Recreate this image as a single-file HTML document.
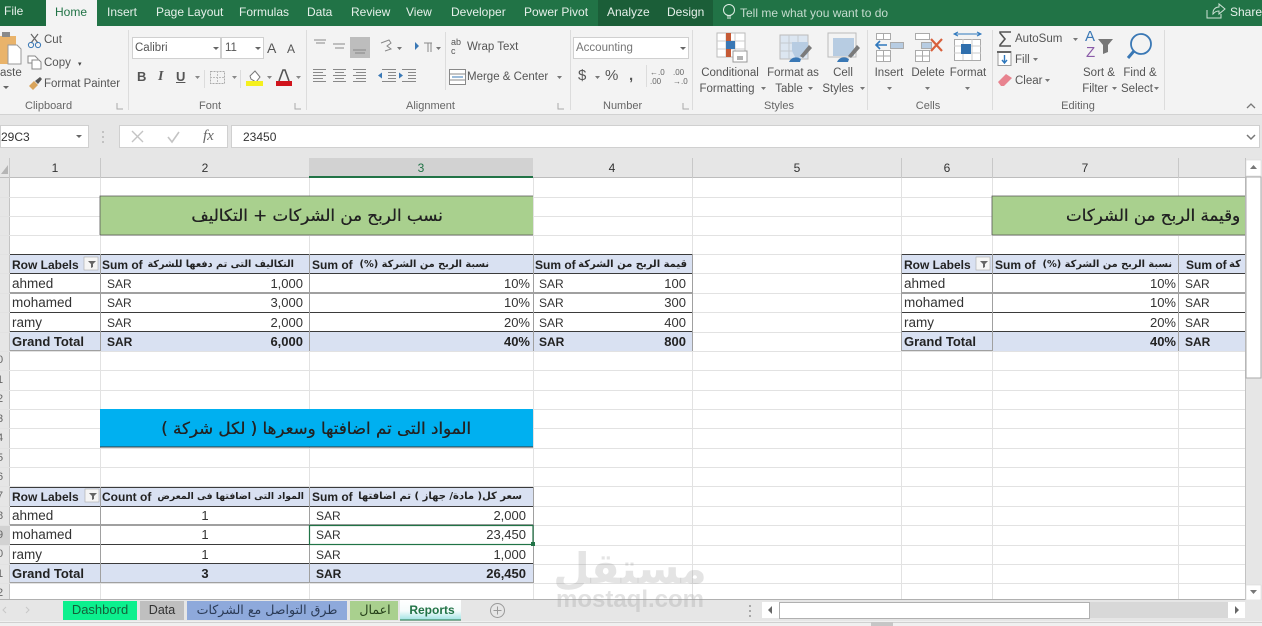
<!DOCTYPE html>
<html><head><meta charset="utf-8">
<style>
html,body{margin:0;padding:0;width:1262px;height:626px;overflow:hidden;background:#fff}
#w{position:relative;width:1262px;height:626px;overflow:hidden;font-family:"Liberation Sans",sans-serif;color:#444;filter:blur(.3px)}
svg{position:absolute;left:0;top:0}
.t{position:absolute;white-space:nowrap;line-height:16px;font-size:12px}
.c{transform:translateX(-50%)}
.r{transform:translateX(-100%)}
.w{color:#e6f0ea}
.s{font-size:11.5px;color:#555}
.g{font-size:11px;color:#666}
.d{font-size:13px;color:#333}
.n{font-size:13.5px;color:#333}
.m{font-size:12px;color:#333}
.b{font-weight:bold;color:#222;font-size:13px}
.bm{font-weight:bold;color:#222;font-size:12px}
.h{font-weight:bold;color:#222;font-size:12px}
.a{font-family:"DejaVu Sans",sans-serif;font-weight:bold;color:#222;font-size:10px}
.ti{font-family:"DejaVu Sans",sans-serif;font-size:16.7px;color:#222;line-height:22px;text-shadow:.3px 0 #222}
</style></head><body><div id="w">
<svg width="1262" height="626" viewBox="0 0 1262 626">
<!-- title -->
<rect width="1262" height="26" fill="#217346"/>
<rect x="0" y="0" width="46" height="26" fill="#1d6b3f"/>
<rect x="46" y="0" width="51" height="27" fill="#f3f3f3"/>
<rect x="598" y="0" width="115" height="26" fill="#1b5e38"/>
<!-- ribbon -->
<rect y="26" width="1262" height="89" fill="#f3f3f3"/>
<rect y="115" width="1262" height="43" fill="#e6e6e6"/>
<rect y="114" width="1262" height="1" fill="#d2d2d2"/>
<g fill="#dcdcdc"><rect x="128" y="30" width="1" height="80"/><rect x="306" y="30" width="1" height="80"/><rect x="570" y="30" width="1" height="80"/><rect x="692" y="30" width="1" height="80"/><rect x="867" y="30" width="1" height="80"/><rect x="992" y="30" width="1" height="80"/><rect x="1164" y="30" width="1" height="80"/><rect x="204" y="70" width="1" height="18"/><rect x="240" y="70" width="1" height="18"/><rect x="445" y="32" width="1" height="58"/></g>
<!-- paste -->
<rect x="0" y="36" width="16" height="28" fill="#e9b36a"/><rect x="2" y="32" width="8" height="5" fill="#8a8a8a"/><path d="M8 45h9l4 4v15H8z" fill="#fff" stroke="#9a9a9a"/>
<path d="M3 87l3 3 3-3z" fill="#666" transform="translate(0 -1)"/>
<!-- cut copy painter -->
<path d="M31 34l7 9M38 34l-7 9" stroke="#666" stroke-width="1.2" fill="none"/><circle cx="31" cy="45" r="2.6" fill="none" stroke="#3a78b5"/><circle cx="38" cy="45" r="2.6" fill="none" stroke="#3a78b5"/>
<path d="M28 56h7l3 3v4h-10z" fill="#fff" stroke="#888"/><path d="M32 60h7l2 2v7h-9z" fill="#fff" stroke="#888"/>
<path d="M29 86l5-5 4 4-5 5z" fill="#d9a45b"/><path d="M35 81l5-4 2 2-4 5z" fill="#555"/>
<!-- combos -->
<g fill="#fff" stroke="#d0d0d0"><rect x="132.500" y="37.500" width="88" height="21"/><rect x="221.500" y="37.500" width="42" height="21"/><rect x="573.500" y="37.500" width="115" height="21"/><rect x="0.500" y="125.500" width="88" height="22"/><rect x="119.500" y="125.500" width="108" height="22"/><rect x="231.500" y="125.500" width="1028" height="22"/></g>
<g fill="#666"><path d="M213 47h6l-3 3z"/><path d="M255 47h6l-3 3z"/><path d="M680 47h6l-3 3z"/><path d="M76 135h6l-3 3z"/></g>
<!-- font row -->
<g fill="#888" font-size="0"><path d="M195 76h5l-2.500 3zM232 76h5l-2.500 3zM267 76h5l-2.500 3zM296 76h5l-2.500 3z"/></g>
<rect x="210.500" y="71.500" width="14" height="12" fill="none" stroke="#aaa" stroke-dasharray="2 1"/><path d="M217.500 71v13M210 77.500h15" stroke="#bbb" stroke-dasharray="2 1"/>
<path d="M250 76l5-5 5 6-4 5-5-3z" fill="#fff" stroke="#777"/><rect x="246" y="81" width="17" height="5" fill="#f5f01e"/>
<path d="M279 81l4-11h2l4 11" fill="none" stroke="#555" stroke-width="1.6"/><rect x="276" y="81" width="16" height="5" fill="#d0141c"/>
<!-- alignment -->
<rect x="350" y="37" width="20" height="21" fill="#bdbdbd"/>
<g stroke="#888" stroke-width="1" fill="none">
<path d="M314 40h12M316 43h9M333 44h12M335 48h9M353 50h13M355 53h10"/>
<path d="M313 69.500h13M313 72.500h10M313 75.500h13M313 78.500h10M313 81.500h13"/>
<path d="M333 69.500h13M335 72.500h9M333 75.500h13M335 78.500h9M333 81.500h13"/>
<path d="M353 69.500h13M356 72.500h10M353 75.500h13M356 78.500h10M353 81.500h13"/>
<path d="M382 69.500h14M388 72.500h8M388 75.500h8M388 78.500h8M382 81.500h14M402 69.500h14M408 72.500h8M408 75.500h8M408 78.500h8M402 81.500h14"/>
<path d="M381 43l8-3 2 3-4 3 4 3-6 2"/>
<path d="M424 43h8M428 43v9M431 43v9"/>
</g>
<g fill="#3a78b5"><path d="M378 75.500l4-3v6zM399 72.500l4 3-4 3zM415 42l4 4-4 4z"/></g>
<g fill="#777"><path d="M397 47h5l-2.500 3zM436 47h5l-2.500 3zM557 76h5l-2.500 3z"/></g>
<path d="M449.500 69.500h16v15h-16zM449.500 74h16M449.500 80h16" fill="#fff" stroke="#888"/><path d="M452 77h11" stroke="#3a78b5"/>
<!-- number -->
<path d="M595 76h5l-2.500 3zM600 76h0" fill="#777"/>
<rect x="646" y="65" width="1" height="22" fill="#dcdcdc"/>
<!-- styles icons -->
<g>
<rect x="717" y="33" width="28" height="24" fill="#fff" stroke="#bbb"/><path d="M717 41h28M717 49h28M726 33v24M735 33v24" stroke="#ccc"/>
<rect x="726" y="33" width="5" height="8" fill="#c55a36"/><rect x="726" y="41" width="9" height="8" fill="#3a78b5"/><rect x="726" y="49" width="5" height="8" fill="#c55a36"/>
<rect x="733" y="51" width="14" height="11" fill="#fff" stroke="#999"/><path d="M737 57h6M737 59h6" stroke="#666"/>
<rect x="780" y="35" width="28" height="24" fill="#dce6f1" stroke="#bbb"/><path d="M780 43h28M780 51h28M789 35v24M798 35v24" stroke="#c4c9cf"/><path d="M792 42h16v12l-12 5-4-8z" fill="#b7cce2"/>
<path d="M800 56l9-11 3 3-9 10z" fill="#7a7a7a"/><path d="M789 62c2-5 8-6 12-3l-1 3z" fill="#3a78b5"/>
<rect x="828" y="33" width="28" height="24" fill="#f3f3f3" stroke="#bbb"/><rect x="833" y="38" width="21" height="18" fill="#b7cce2"/>
<path d="M848 56l9-11 3 3-9 10z" fill="#7a7a7a"/><path d="M837 62c2-5 8-6 12-3l-1 3z" fill="#3a78b5"/>
</g>
<!-- cells icons -->
<g fill="#fff" stroke="#aaa">
<rect x="876.500" y="33.500" width="14" height="6"/><path d="M883.500 33v6" /><rect x="876.500" y="50.500" width="14" height="11"/><path d="M883.500 50v11M876 56h15"/>
<rect x="890.500" y="42.500" width="13" height="6" fill="#b7cce2"/>
<rect x="915.500" y="33.500" width="14" height="6"/><rect x="915.500" y="50.500" width="14" height="11"/><path d="M922.500 50v11M915 56h15"/>
<rect x="921.500" y="42.500" width="10" height="6" fill="#b7cce2"/>
<rect x="954.500" y="39.500" width="26" height="21"/><path d="M963 39v21M972 39v21M954 46h27M954 53h27" stroke="#ccc"/>
</g>
<path d="M887 45h-11M880 41l-4 4 4 4" stroke="#2f78bd" stroke-width="1.6" fill="none"/>
<path d="M931 39l11 12M942 39l-11 12" stroke="#d8603c" stroke-width="2.200"/>
<rect x="961" y="44" width="10" height="10" fill="#2f6fad"/>
<path d="M954 34h27M958 32l-4 2 4 2M977 32l4 2-4 2" stroke="#2f78bd" fill="none"/>
<!-- editing icons -->
<path d="M1011 32h-11v1l5 6-5 6v1h11" fill="none" stroke="#555" stroke-width="1.600"/>
<rect x="998" y="51.500" width="13" height="14" fill="#fff" stroke="#999"/><rect x="997" y="51" width="14" height="2" fill="#666"/><path d="M1004.500 55v7M1002 60l2.500 3 2.500-3" stroke="#2f78bd" fill="none" stroke-width="1.400"/>
<path d="M998 82l8-8 6 4-8 8h-3z" fill="#e8838f"/>
<path d="M1098 39h15l-5 6v7l-5 2v-9z" fill="#777"/>
<circle cx="1141" cy="44" r="10" fill="none" stroke="#3a78b5" stroke-width="1.800"/><path d="M1134 51l-6 7" stroke="#3a78b5" stroke-width="3"/>
<path d="M1073 38h5l-2.500 3zM1033 58h5l-2.500 3zM1045 79h5l-2.500 3zM1033 38h0zM761 87h5l-2.500 3zM808 87h5l-2.500 3zM860 87h5l-2.500 3zM887 87h5l-2.500 3zM925 87h5l-2.500 3zM965 87h5l-2.500 3zM1112 87h5l-2.500 3zM1154 87h5l-2.500 3z" fill="#777"/>
<path d="M1247 108l4-4 4 4" fill="none" stroke="#777" stroke-width="1.300"/>
<path d="M1247 135l4 4 4-4" fill="none" stroke="#777" stroke-width="1.500"/>
<g fill="none" stroke="#aaa"><path d="M117 103v6h6M295 103v6h6M558 103v6h6M683 103v6h6" /></g>
<!-- formula marks -->
<path d="M132 131l11 11M143 131l-11 11" stroke="#c4c4c4" stroke-width="1.400"/><path d="M168 137l4 5 7-10" stroke="#c4c4c4" stroke-width="1.600" fill="none"/>
<g fill="#c2c2c2"><rect x="102" y="131" width="2" height="2"/><rect x="102" y="136" width="2" height="2"/><rect x="102" y="141" width="2" height="2"/></g>
<!-- lightbulb / share -->
<circle cx="729" cy="10" r="5.500" fill="none" stroke="#dfeee5"/><path d="M727 16h4M727 18h4" stroke="#dfeee5"/>
<path d="M1207 10v8h14v-4M1213 13c0-4 3-6 6-6V4l6 5-6 5v-3c-3 0-4 1-6 3z" fill="none" stroke="#cfe3d7"/>
<!-- column headers -->
<rect y="158" width="1245" height="19" fill="#e6e6e6"/><rect x="0" y="177" width="1245" height="1" fill="#bdbdbd"/>
<rect x="309" y="158" width="224" height="19" fill="#d2d2d2"/><rect x="309" y="176" width="224" height="2" fill="#217346"/>
<path d="M1 174l7-9v9z" fill="#b5b5b5"/>
<g fill="#c8c8c8"><rect x="9" y="158" width="1" height="20"/><rect x="100" y="158" width="1" height="20"/><rect x="692" y="158" width="1" height="20"/><rect x="901" y="158" width="1" height="20"/><rect x="992" y="158" width="1" height="20"/><rect x="1178" y="158" width="1" height="20"/></g>
<!-- row header col -->
<rect y="178" width="10" height="422" fill="#e6e6e6"/><rect x="9" y="178" width="1" height="422" fill="#c4c4c4"/>
<rect y="526" width="10" height="19" fill="#d2d2d2"/>
<!-- grid -->
<g fill="#e2e2e2">
<rect x="0" y="197" width="1245" height="1"/><rect x="0" y="216" width="1245" height="1"/><rect x="0" y="235" width="1245" height="1"/><rect x="0" y="254" width="1245" height="1"/><rect x="0" y="273" width="1245" height="1"/><rect x="0" y="293" width="1245" height="1"/><rect x="0" y="312" width="1245" height="1"/><rect x="0" y="332" width="1245" height="1"/><rect x="0" y="351" width="1245" height="1"/><rect x="0" y="370" width="1245" height="1"/><rect x="0" y="390" width="1245" height="1"/><rect x="0" y="409" width="1245" height="1"/><rect x="0" y="428" width="1245" height="1"/><rect x="0" y="448" width="1245" height="1"/><rect x="0" y="467" width="1245" height="1"/><rect x="0" y="486" width="1245" height="1"/><rect x="0" y="506" width="1245" height="1"/><rect x="0" y="525" width="1245" height="1"/><rect x="0" y="545" width="1245" height="1"/><rect x="0" y="564" width="1245" height="1"/><rect x="0" y="583" width="1245" height="1"/>
<rect x="100" y="178" width="1" height="422"/><rect x="309" y="178" width="1" height="422"/><rect x="533" y="178" width="1" height="422"/><rect x="692" y="178" width="1" height="422"/><rect x="901" y="178" width="1" height="422"/><rect x="992" y="178" width="1" height="422"/><rect x="1178" y="178" width="1" height="422"/>
</g>
<!-- titles -->
<rect x="100" y="196" width="433" height="39" fill="#a9d08e"/><path d="M100 235V196H533M100 235H533" fill="none" stroke="#555" stroke-width=".8"/>
<rect x="992" y="196" width="253" height="39" fill="#a9d08e"/><path d="M992 235V196H1245M992 235H1245" fill="none" stroke="#555" stroke-width=".8"/>
<rect x="100" y="409" width="433" height="38" fill="#00b0f0"/><path d="M100 447h433" stroke="#333"/>
<!-- tables fills -->
<rect x="10" y="254" width="682" height="19" fill="#d9e1f2"/><rect x="10" y="332" width="682" height="19" fill="#d9e1f2"/>
<rect x="901" y="254" width="344" height="19" fill="#d9e1f2"/><rect x="901" y="332" width="344" height="19" fill="#d9e1f2"/>
<rect x="10" y="487" width="523" height="19" fill="#d9e1f2"/><rect x="10" y="564" width="523" height="19" fill="#d9e1f2"/>
<rect x="10" y="273" width="682" height="59" fill="#fff"/><rect x="901" y="273" width="344" height="59" fill="#fff"/><rect x="10" y="506" width="523" height="58" fill="#fff"/>
<!-- table lines -->
<g fill="#3b3b3b">
<rect x="10" y="254" width="682" height="1"/><rect x="10" y="273" width="682" height="1"/><rect x="10" y="312" width="682" height="1"/><rect x="10" y="331" width="682" height="1"/>
<rect x="901" y="254" width="344" height="1"/><rect x="901" y="273" width="344" height="1"/><rect x="901" y="312" width="344" height="1"/><rect x="901" y="331" width="344" height="1"/>
<rect x="10" y="487" width="523" height="1"/><rect x="10" y="506" width="523" height="1"/><rect x="10" y="544" width="523" height="1"/><rect x="10" y="563" width="523" height="1"/>
</g>
<g fill="#a0a0a0">
<rect x="10" y="292" width="682" height="2"/><rect x="901" y="292" width="344" height="2"/><rect x="10" y="524" width="523" height="2"/>
<rect x="10" y="350" width="90" height="1"/><rect x="901" y="350" width="91" height="1"/><rect x="10" y="582" width="523" height="1"/>
<rect x="100" y="254" width="1" height="97"/><rect x="309" y="254" width="1" height="97"/><rect x="533" y="254" width="1" height="97"/><rect x="692" y="254" width="1" height="97"/>
<rect x="901" y="254" width="1" height="97"/><rect x="992" y="254" width="1" height="97"/><rect x="1178" y="254" width="1" height="97"/>
<rect x="100" y="487" width="1" height="96"/><rect x="309" y="487" width="1" height="96"/><rect x="533" y="487" width="1" height="96"/>
</g>
<!-- filter buttons -->
<g><rect x="84" y="257" width="14" height="13" fill="#f5f5f5" stroke="#aaa" stroke-width=".6"/><path d="M88 261h8l-3 3v3l-2 1v-4z" fill="#666"/><rect x="85" y="489" width="14" height="13" fill="#f5f5f5" stroke="#aaa" stroke-width=".6"/><path d="M89 493h8l-3 3v3l-2 1v-4z" fill="#666"/><rect x="976" y="257" width="14" height="13" fill="#f5f5f5" stroke="#aaa" stroke-width=".6"/><path d="M980 261h8l-3 3v3l-2 1v-4z" fill="#666"/></g>
<!-- selection -->
<rect x="309.500" y="525.500" width="223.500" height="19" fill="none" stroke="#217346" stroke-width="1.200"/><rect x="531" y="542" width="4" height="4" fill="#217346"/>
<!-- vertical scrollbar -->
<rect x="1245" y="158" width="17" height="442" fill="#e6e6e6"/><rect x="1245" y="158" width="1" height="442" fill="#c2c2c2"/>
<rect x="1246" y="160" width="15" height="16" fill="#fff" stroke="#d8d8d8" stroke-width=".6"/><path d="M1250 169l3.500-4 3.500 4z" fill="#777"/>
<rect x="1246" y="177" width="15" height="201" fill="#fff" stroke="#aaa"/>
<rect x="1246" y="585" width="15" height="15" fill="#fff" stroke="#d8d8d8" stroke-width=".6"/><path d="M1250 590l3.500 4 3.500-4z" fill="#777"/>
<!-- tab strip -->
<rect y="600" width="1262" height="21" fill="#e6e6e6"/><rect y="599" width="1245" height="1" fill="#b0b0b0"/><rect y="621" width="1262" height="5" fill="#f0f0f0"/><rect y="622" width="1262" height="1" fill="#d0d0d0"/>
<path d="M6 607l-3 3 3 3M26 607l3 3-3 3" fill="none" stroke="#c8c8c8"/>
<rect x="63" y="601" width="74" height="19" fill="#0cf08e"/>
<rect x="140" y="601" width="44" height="19" fill="#bfbfbf"/>
<rect x="187" y="601" width="160" height="19" fill="#8ea9db"/>
<rect x="350" y="601" width="48" height="19" fill="#a9d08e"/>
<defs><linearGradient id="tg" x1="0" y1="0" x2="0" y2="1"><stop offset="0" stop-color="#fff"/><stop offset=".55" stop-color="#f5fbfb"/><stop offset="1" stop-color="#9fe3e3"/></linearGradient></defs>
<rect x="400" y="600" width="61" height="20" fill="url(#tg)"/><path d="M400 620h61" stroke="#217346"/>
<circle cx="497.500" cy="610.500" r="7" fill="none" stroke="#9a9a9a"/><path d="M497.500 606.500v8M493.500 610.500h8" stroke="#9a9a9a"/>
<!-- h scrollbar -->
<g fill="#a8a8a8"><rect x="749" y="605" width="2" height="2"/><rect x="749" y="610" width="2" height="2"/><rect x="749" y="615" width="2" height="2"/></g>
<rect x="762" y="602" width="17" height="16" fill="#fff"/><path d="M772 606l-4 4 4 4z" fill="#666"/>
<rect x="779.500" y="602.500" width="310" height="16" fill="#fff" stroke="#b0b0b0"/>
<rect x="1090" y="602" width="138" height="16" fill="#d8d8d8"/>
<rect x="1228" y="602" width="17" height="16" fill="#fff"/><path d="M1235 606l4 4-4 4z" fill="#666"/>
<rect x="871" y="622" width="22" height="4" fill="#c6c6c6"/>
</svg>

<!-- title bar -->
<div class="t w" style="left:4px;top:3px">File</div>
<div class="t" style="left:55px;top:4px;color:#217346">Home</div>
<div class="t w" style="left:107px;top:4px">Insert</div>
<div class="t w" style="left:156px;top:4px">Page Layout</div>
<div class="t w" style="left:239px;top:4px">Formulas</div>
<div class="t w" style="left:307px;top:4px">Data</div>
<div class="t w" style="left:351px;top:4px">Review</div>
<div class="t w" style="left:406px;top:4px">View</div>
<div class="t w" style="left:451px;top:4px">Developer</div>
<div class="t w" style="left:524px;top:4px">Power Pivot</div>
<div class="t w" style="left:607px;top:4px">Analyze</div>
<div class="t w" style="left:667px;top:4px">Design</div>
<div class="t" style="left:740px;top:5px;color:#c5dccf">Tell me what you want to do</div>
<div class="t w" style="left:1230px;top:4px">Share</div>

<!-- clipboard -->
<div class="t s" style="left:0;top:65px">aste</div>
<div class="t s" style="left:44px;top:32px">Cut</div>
<div class="t s" style="left:44px;top:55px">Copy</div>
<div class="t" style="left:78px;top:57px;font-size:7px">▾</div>
<div class="t s" style="left:44px;top:76px">Format Painter</div>
<div class="t g" style="left:25px;top:98px">Clipboard</div>
<!-- font -->
<div class="t s" style="left:135px;top:40px">Calibri</div>
<div class="t s" style="left:225px;top:40px">11</div>
<div class="t" style="left:267px;top:40px;font-size:14px;color:#555">A</div>
<div class="t" style="left:287px;top:41px;font-size:12px;color:#555">A</div>
<div class="t" style="left:137px;top:69px;font-weight:bold;font-size:13px;color:#555">B</div>
<div class="t" style="left:158px;top:69px;font-style:italic;font-weight:bold;font-family:'Liberation Serif',serif;font-size:14px;color:#555">I</div>
<div class="t" style="left:176px;top:69px;font-weight:bold;font-size:13px;color:#555;text-decoration:underline">U</div>
<div class="t g" style="left:199px;top:98px">Font</div>
<!-- alignment -->
<div class="t" style="left:451px;top:38px;font-size:9px;line-height:9px;color:#555">ab<br>c</div>
<div class="t s" style="left:467px;top:39px">Wrap Text</div>
<div class="t s" style="left:467px;top:69px">Merge &amp; Center</div>
<div class="t g" style="left:406px;top:98px">Alignment</div>
<!-- number -->
<div class="t s" style="left:576px;top:40px;color:#777">Accounting</div>
<div class="t" style="left:578px;top:68px;font-size:15px;color:#555">$</div>
<div class="t" style="left:605px;top:68px;font-size:15px;color:#555">%</div>
<div class="t" style="left:629px;top:68px;font-size:15px;font-weight:bold;color:#555">,</div>
<div class="t" style="left:650px;top:68px;font-size:8px;line-height:9px;color:#666">←.0<br>.00</div>
<div class="t" style="left:673px;top:68px;font-size:8px;line-height:9px;color:#666">.00<br>→.0</div>
<div class="t g" style="left:603px;top:98px">Number</div>
<!-- styles -->
<div class="t s c" style="left:730px;top:65px">Conditional</div>
<div class="t s c" style="left:727px;top:81px">Formatting</div>
<div class="t s c" style="left:793px;top:65px">Format as</div>
<div class="t s c" style="left:789px;top:81px">Table</div>
<div class="t s c" style="left:843px;top:65px">Cell</div>
<div class="t s c" style="left:838px;top:81px">Styles</div>
<div class="t g c" style="left:779px;top:98px">Styles</div>
<!-- cells -->
<div class="t s c" style="left:889px;top:65px">Insert</div>
<div class="t s c" style="left:928px;top:65px">Delete</div>
<div class="t s c" style="left:968px;top:65px">Format</div>
<div class="t g c" style="left:928px;top:98px">Cells</div>
<!-- editing -->
<div class="t s" style="left:1015px;top:31px">AutoSum</div>
<div class="t s" style="left:1015px;top:52px">Fill</div>
<div class="t s" style="left:1015px;top:73px">Clear</div>
<div class="t" style="left:1085px;top:29px;font-size:15px;color:#3a78b5">A</div>
<div class="t" style="left:1086px;top:45px;font-size:15px;color:#8a5ba8">Z</div>
<div class="t s c" style="left:1099px;top:65px">Sort &amp;</div>
<div class="t s c" style="left:1095px;top:81px">Filter</div>
<div class="t s c" style="left:1140px;top:65px">Find &amp;</div>
<div class="t s c" style="left:1137px;top:81px">Select</div>
<div class="t g c" style="left:1078px;top:98px">Editing</div>
<!-- formula bar -->
<div class="t m" style="left:1px;top:129px">29C3</div>
<div class="t" style="left:203px;top:128px;font-family:'Liberation Serif',serif;font-style:italic;font-size:15px;color:#666">fx</div>
<div class="t m" style="left:243px;top:129px">23450</div>
<!-- column letters -->
<div class="t m c" style="left:55px;top:160px">1</div>
<div class="t m c" style="left:205px;top:160px">2</div>
<div class="t m c" style="left:421px;top:160px;color:#217346">3</div>
<div class="t m c" style="left:612px;top:160px">4</div>
<div class="t m c" style="left:797px;top:160px">5</div>
<div class="t m c" style="left:947px;top:160px">6</div>
<div class="t m c" style="left:1085px;top:160px">7</div>
<!-- row number fragments -->
<div class="t g" style="left:-3px;top:352px">0</div><div class="t g" style="left:-3px;top:372px">1</div><div class="t g" style="left:-3px;top:391px">2</div><div class="t g" style="left:-3px;top:411px">3</div><div class="t g" style="left:-3px;top:430px">4</div><div class="t g" style="left:-3px;top:450px">5</div><div class="t g" style="left:-3px;top:469px">6</div><div class="t g" style="left:-3px;top:488px">7</div><div class="t g" style="left:-3px;top:508px">8</div><div class="t g" style="left:-3px;top:527px">9</div><div class="t g" style="left:-3px;top:546px">0</div><div class="t g" style="left:-3px;top:566px">1</div><div class="t g" style="left:-3px;top:585px">2</div>

<!-- titles -->
<div class="t ti c" dir="rtl" style="left:317px;top:204px">نسب الربح من الشركات + التكاليف</div>
<div class="t ti c" dir="rtl" style="left:316px;top:417px">المواد التى تم اضافتها وسعرها ( لكل شركة )</div>
<div style="position:absolute;left:992px;top:196px;width:253px;height:39px;overflow:hidden"><div class="t ti r" dir="rtl" style="left:248px;top:8px">وقيمة الربح من الشركات</div></div>

<!-- table 1 -->
<div class="t h" style="left:12px;top:257px">Row Labels</div>
<div class="t h" style="left:102px;top:257px">Sum of</div><div class="t a r" dir="rtl" style="left:294px;top:257px;font-size:9.7px">التكاليف التى تم دفعها للشركة</div>
<div class="t h" style="left:312px;top:257px">Sum of</div><div class="t a r" dir="rtl" style="left:489px;top:257px;font-size:9.8px">نسبة الربح من الشركة (%)</div>
<div class="t h" style="left:535px;top:257px">Sum of</div><div class="t a r" dir="rtl" style="left:687px;top:257px">قيمة الربح من الشركة</div>

<div class="t n" style="left:12px;top:276px">ahmed</div><div class="t m" style="left:107px;top:276px">SAR</div><div class="t d r" style="left:303px;top:276px">1,000</div><div class="t d r" style="left:530px;top:276px">10%</div><div class="t m" style="left:539px;top:276px">SAR</div><div class="t d r" style="left:686px;top:276px">100</div>
<div class="t n" style="left:12px;top:295px">mohamed</div><div class="t m" style="left:107px;top:295px">SAR</div><div class="t d r" style="left:303px;top:295px">3,000</div><div class="t d r" style="left:530px;top:295px">10%</div><div class="t m" style="left:539px;top:295px">SAR</div><div class="t d r" style="left:686px;top:295px">300</div>
<div class="t n" style="left:12px;top:315px">ramy</div><div class="t m" style="left:107px;top:315px">SAR</div><div class="t d r" style="left:303px;top:315px">2,000</div><div class="t d r" style="left:530px;top:315px">20%</div><div class="t m" style="left:539px;top:315px">SAR</div><div class="t d r" style="left:686px;top:315px">400</div>
<div class="t b" style="left:12px;top:334px">Grand Total</div><div class="t bm" style="left:107px;top:334px">SAR</div><div class="t b r" style="left:303px;top:334px">6,000</div><div class="t b r" style="left:530px;top:334px">40%</div><div class="t bm" style="left:539px;top:334px">SAR</div><div class="t b r" style="left:686px;top:334px">800</div>

<!-- table 2 -->
<div class="t h" style="left:904px;top:257px">Row Labels</div>
<div class="t h" style="left:995px;top:257px">Sum of</div><div class="t a r" dir="rtl" style="left:1172px;top:257px;font-size:9.8px">نسبة الربح من الشركة (%)</div>
<div class="t h" style="left:1186px;top:257px">Sum of</div>
<div class="t a" dir="rtl" style="left:1229px;top:257px">كة</div>
<div class="t n" style="left:904px;top:276px">ahmed</div><div class="t d r" style="left:1176px;top:276px">10%</div><div class="t m" style="left:1185px;top:276px">SAR</div>
<div class="t n" style="left:904px;top:295px">mohamed</div><div class="t d r" style="left:1176px;top:295px">10%</div><div class="t m" style="left:1185px;top:295px">SAR</div>
<div class="t n" style="left:904px;top:315px">ramy</div><div class="t d r" style="left:1176px;top:315px">20%</div><div class="t m" style="left:1185px;top:315px">SAR</div>
<div class="t b" style="left:904px;top:334px">Grand Total</div><div class="t b r" style="left:1176px;top:334px">40%</div><div class="t bm" style="left:1185px;top:334px">SAR</div>

<!-- table 3 -->
<div class="t h" style="left:12px;top:489px">Row Labels</div>
<div class="t h" style="left:102px;top:489px">Count of</div><div class="t a r" dir="rtl" style="left:304px;top:489px;font-size:9.3px">المواد التى اضافتها فى المعرض</div>
<div class="t h" style="left:312px;top:489px">Sum of</div><div class="t a r" dir="rtl" style="left:522px;top:489px">سعر كل( مادة/ جهاز ) تم اضافتها</div>
<div class="t n" style="left:12px;top:508px">ahmed</div><div class="t d c" style="left:205px;top:508px">1</div><div class="t m" style="left:316px;top:508px">SAR</div><div class="t d r" style="left:526px;top:508px">2,000</div>
<div class="t n" style="left:12px;top:527px">mohamed</div><div class="t d c" style="left:205px;top:527px">1</div><div class="t m" style="left:316px;top:527px">SAR</div><div class="t d r" style="left:526px;top:527px">23,450</div>
<div class="t n" style="left:12px;top:547px">ramy</div><div class="t d c" style="left:205px;top:547px">1</div><div class="t m" style="left:316px;top:547px">SAR</div><div class="t d r" style="left:526px;top:547px">1,000</div>
<div class="t b" style="left:12px;top:566px">Grand Total</div><div class="t b c" style="left:205px;top:566px">3</div><div class="t bm" style="left:316px;top:566px">SAR</div><div class="t b r" style="left:526px;top:566px">26,450</div>

<!-- tabs -->
<div class="t m c" style="left:100px;top:602px;color:#14603a;font-size:13px">Dashbord</div>
<div class="t m c" style="left:162px;top:602px;font-size:12.5px">Data</div>
<div class="t c" dir="rtl" style="left:267px;top:602px;font-family:'DejaVu Sans',sans-serif;font-size:12.6px;color:#2a3a55">طرق التواصل مع الشركات</div>
<div class="t c" dir="rtl" style="left:375px;top:602px;font-family:'DejaVu Sans',sans-serif;font-size:12.6px;color:#26401a">اعمال</div>
<div class="t c" style="left:432px;top:602px;font-weight:bold;color:#217346">Reports</div>

<!-- watermark -->
<div class="t c" dir="rtl" style="left:630px;top:545px;font-family:'DejaVu Sans',sans-serif;font-weight:bold;font-size:42px;line-height:48px;color:rgba(150,150,150,.26)">مستقل</div>
<div class="t c" style="left:630px;top:588px;font-weight:bold;font-size:24px;line-height:24px;color:rgba(150,150,150,.28)">mostaql.com</div>
</div></body></html>
